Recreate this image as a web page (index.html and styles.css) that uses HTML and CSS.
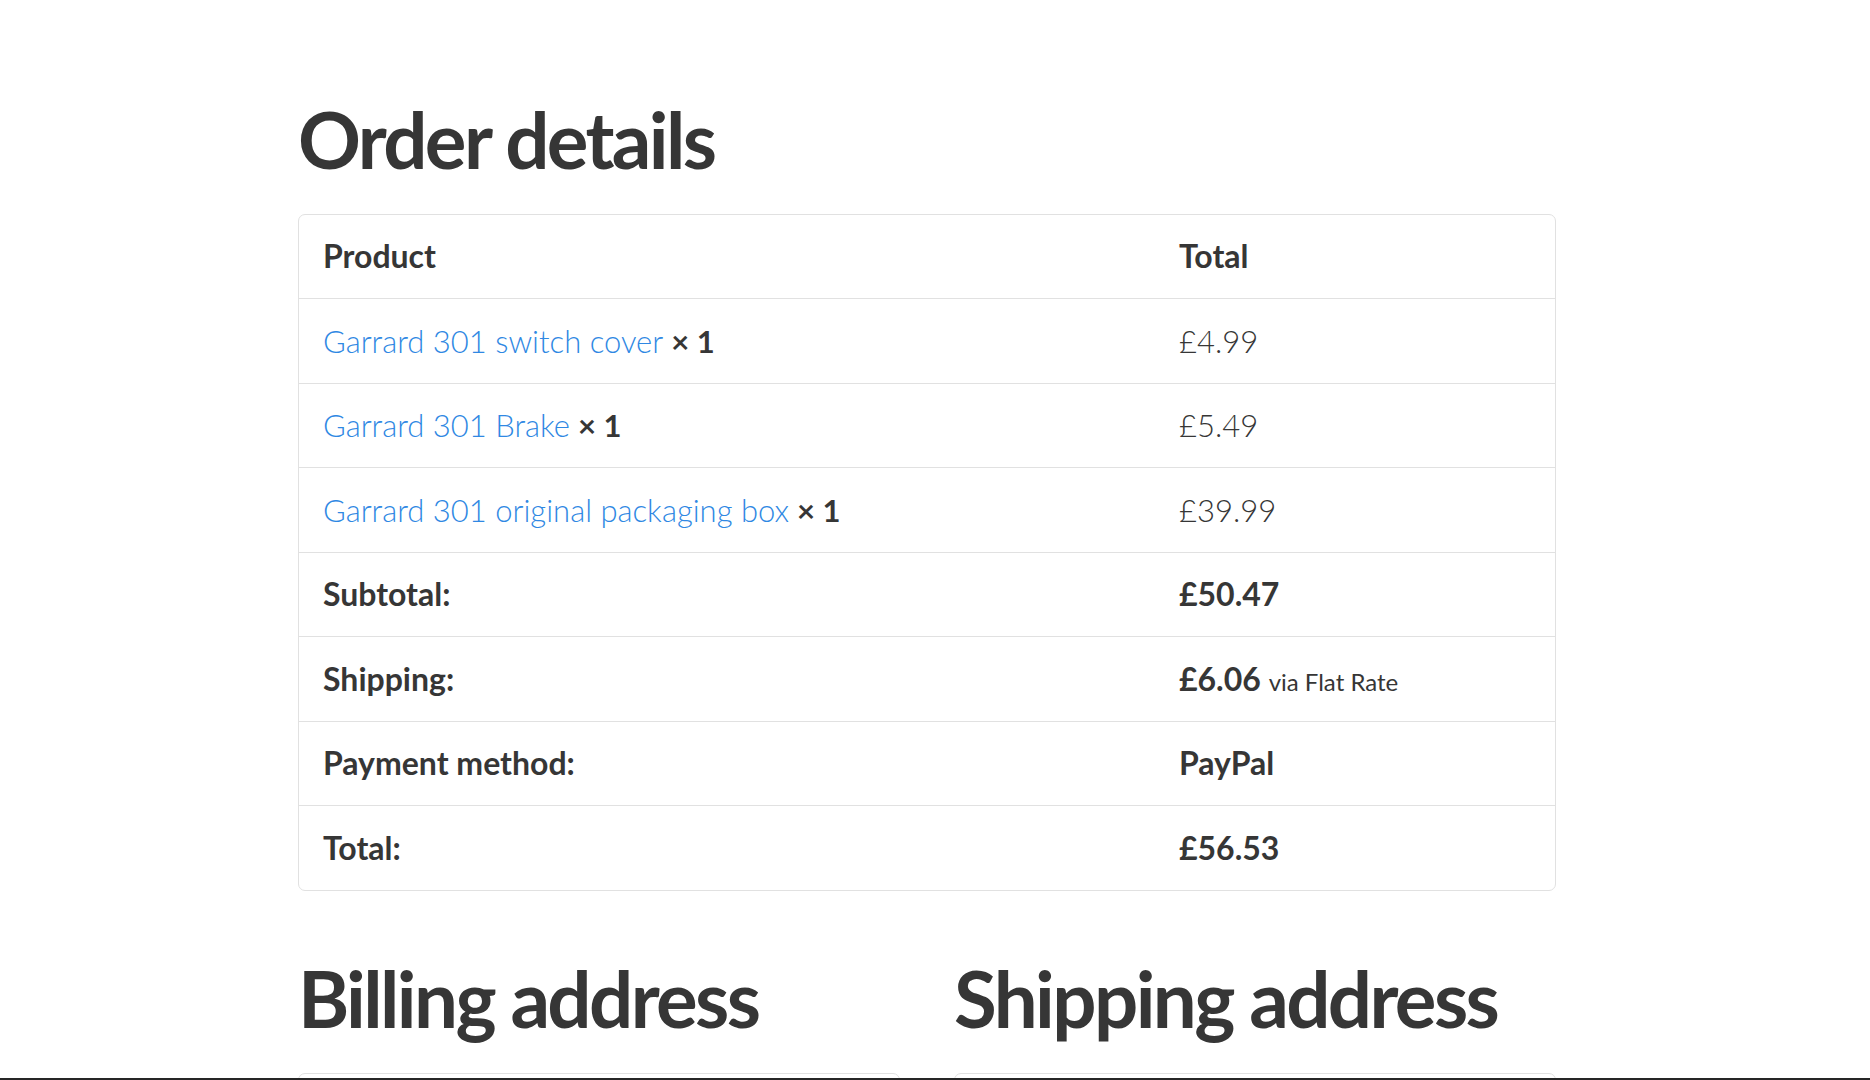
FILE: index.html
```html
<!DOCTYPE html>
<html lang="en">
<head>
<meta charset="utf-8">
<title>Order details</title>
<link rel="stylesheet" href="styles.css">
</head>
<body>
<main class="page">
  <section class="order">
    <h2 class="title">Order details</h2>
    <table class="order-table">
      <colgroup><col class="col-product"><col class="col-total"></colgroup>
      <thead>
        <tr><th>Product</th><th>Total</th></tr>
      </thead>
      <tbody>
        <tr><td><a href="#" class="link">Garrard 301 switch cover</a> <strong class="qty">× 1</strong></td><td class="amount">£4.99</td></tr>
        <tr><td><a href="#" class="link">Garrard 301 Brake</a> <strong class="qty">× 1</strong></td><td class="amount">£5.49</td></tr>
        <tr><td><a href="#" class="link">Garrard 301 original packaging box</a> <strong class="qty">× 1</strong></td><td class="amount">£39.99</td></tr>
      </tbody>
      <tfoot>
        <tr><th>Subtotal:</th><td class="strong">£50.47</td></tr>
        <tr><th>Shipping:</th><td class="strong">£6.06 <small class="via">via Flat Rate</small></td></tr>
        <tr><th>Payment method:</th><td class="strong">PayPal</td></tr>
        <tr><th>Total:</th><td class="strong">£56.53</td></tr>
      </tfoot>
    </table>
  </section>
  <section class="addresses">
    <div class="address-col">
      <h2 class="title">Billing address</h2>
      <div class="address-box"></div>
    </div>
    <div class="address-col">
      <h2 class="title">Shipping address</h2>
      <div class="address-box"></div>
    </div>
  </section>
</main>
<div class="bottom-bar"></div>
</body>
</html>
```
FILE: styles.css
```css
html, body {
  margin: 0;
  padding: 0;
  background: #ffffff;
}
body {
  font-family: "Lato", "Open Sans", "Liberation Sans", sans-serif;
  color: #363636;
  overflow: hidden;
  height: 1080px;
}
.page {
  width: 1258px;
  margin-left: 298px;
  padding-top: 93px;
}
.title {
  font-size: 78px;
  font-weight: 700;
  line-height: 1.2;
  margin: 0;
  letter-spacing: -2.6px;
  color: #363636;
}
.order .title {
  margin-bottom: 27px;
}
.order-table {
  width: 100%;
  table-layout: fixed;
  border-collapse: separate;
  border-spacing: 0;
  border: 1px solid #e1e1e1;
  border-radius: 7px;
  font-size: 31px;
  line-height: 46.5px;
}
.col-product { width: 856px; }
.order-table th,
.order-table td {
  text-align: left;
  padding: 18.5px 24px;
  border-top: 1px solid #e1e1e1;
  vertical-align: middle;
}
.order-table thead th {
  border-top: none;
}
.order-table th {
  font-weight: 700;
  font-size: 32px;
}
.link {
  color: #2f88e3;
  font-weight: 300;
  text-decoration: none;
}
.qty {
  font-weight: 700;
}
.amount {
  font-weight: 300;
}
.strong {
  font-weight: 700;
  font-size: 32px;
}
.via {
  font-size: 24px;
  font-weight: 400;
  line-height: 1;
}
.addresses {
  display: flex;
  gap: 54px;
  margin-top: 61px;
}
.address-col {
  flex: 1;
}
.address-col .title {
  margin-bottom: 28px;
}
.address-box {
  height: 120px;
  border: 1px solid #e1e1e1;
  border-radius: 7px;
}
.bottom-bar {
  position: fixed;
  left: 0;
  right: 0;
  bottom: 0;
  height: 2px;
  background: #262626;
}
```
